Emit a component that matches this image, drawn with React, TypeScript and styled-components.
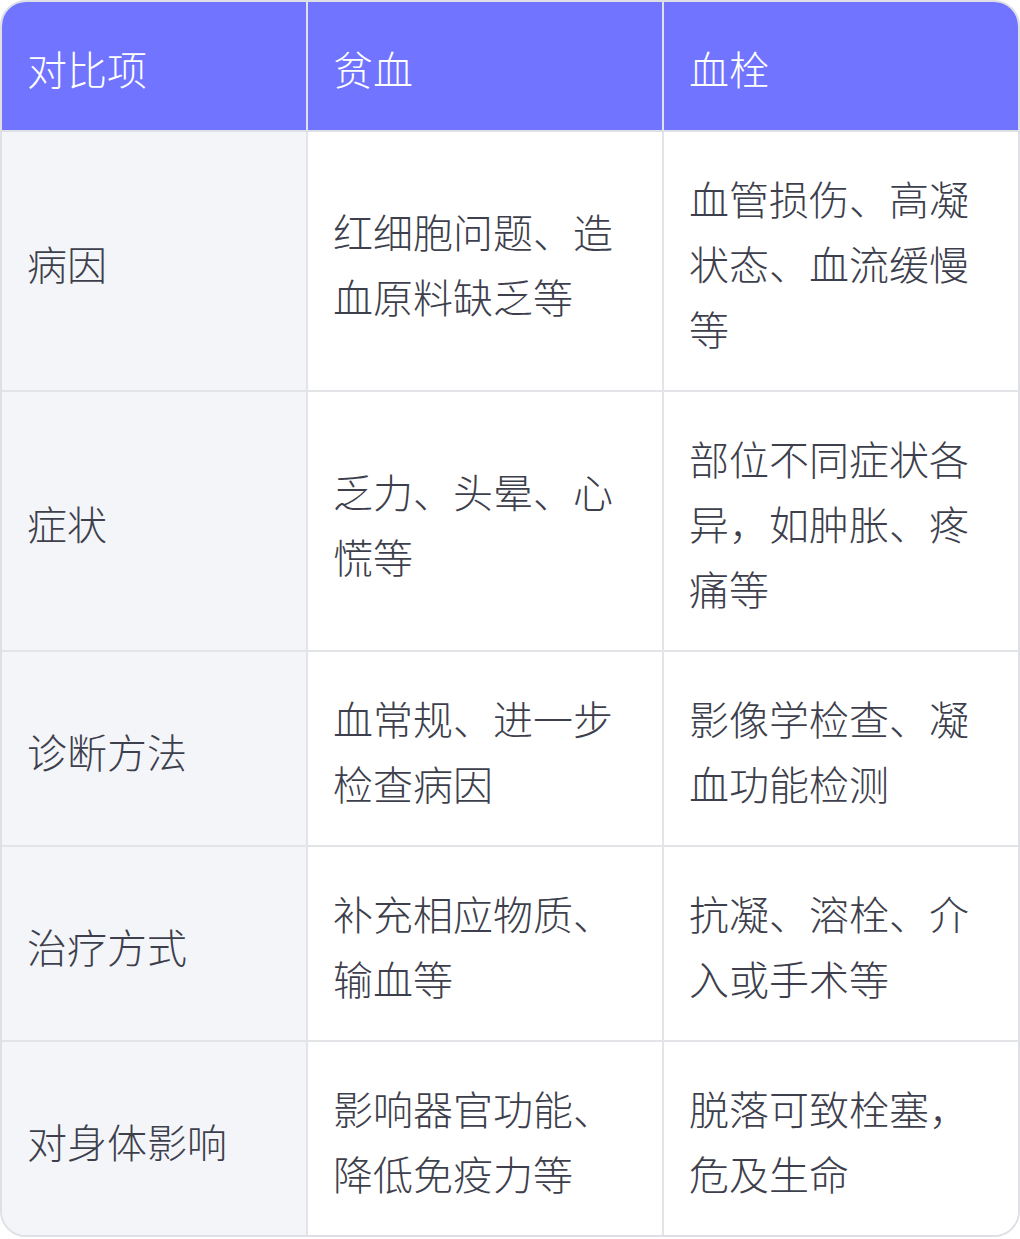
import React from "react";
import styled, { createGlobalStyle } from "styled-components";

const GlobalStyle = createGlobalStyle`
  html, body {
    margin: 0;
    padding: 0;
    background: #ffffff;
  }
  body {
    font-family: "Noto Sans CJK SC", "Noto Sans", sans-serif;
  }
`;

const Frame = styled.div`
  width: 1020px;
  box-sizing: border-box;
  border: 2px solid #dfe0e5;
  border-radius: 26px;
  overflow: hidden;
  background: #ffffff;
`;

const Table = styled.table`
  width: 100%;
  table-layout: fixed;
  border-collapse: separate;
  border-spacing: 0;
`;

const HeadCell = styled.th`
  background: #7074ff;
  color: #ffffff;
  font-weight: 300;
  font-size: 40px;
  line-height: 65px;
  text-align: left;
  padding: 34px 23px 29px 25px;
  border-bottom: 2px solid #dfe0e5;
  border-right: 2px solid #dfe0e5;
  &:last-child {
    border-right: none;
  }
`;

const BodyCell = styled.td<{ $label?: boolean }>`
  background: ${(p) => (p.$label ? "#f4f5f9" : "#ffffff")};
  color: #3d404c;
  font-weight: 300;
  font-size: 40px;
  line-height: 65px;
  text-align: left;
  vertical-align: middle;
  padding: 34px 23px 29px 25px;
  border-bottom: 2px solid #e3e4e8;
  border-right: 2px solid #e3e4e8;
  &:last-child {
    border-right: none;
  }
  tr:last-child > & {
    border-bottom: none;
  }
`;

const rows: [string, string, string][] = [
  ["病因", "红细胞问题、造血原料缺乏等", "血管损伤、高凝状态、血流缓慢等"],
  ["症状", "乏力、头晕、心慌等", "部位不同症状各异，如肿胀、疼痛等"],
  ["诊断方法", "血常规、进一步检查病因", "影像学检查、凝血功能检测"],
  ["治疗方式", "补充相应物质、输血等", "抗凝、溶栓、介入或手术等"],
  ["对身体影响", "影响器官功能、降低免疫力等", "脱落可致栓塞，危及生命"],
];

export default function App() {
  return (
    <>
      <GlobalStyle />
      <Frame>
        <Table>
          <colgroup>
            <col style={{ width: 306 }} />
            <col style={{ width: 356 }} />
            <col />
          </colgroup>
          <thead>
            <tr>
              <HeadCell>对比项</HeadCell>
              <HeadCell>贫血</HeadCell>
              <HeadCell>血栓</HeadCell>
            </tr>
          </thead>
          <tbody>
            {rows.map((r) => (
              <tr key={r[0]}>
                <BodyCell $label>{r[0]}</BodyCell>
                <BodyCell>{r[1]}</BodyCell>
                <BodyCell>{r[2]}</BodyCell>
              </tr>
            ))}
          </tbody>
        </Table>
      </Frame>
    </>
  );
}
